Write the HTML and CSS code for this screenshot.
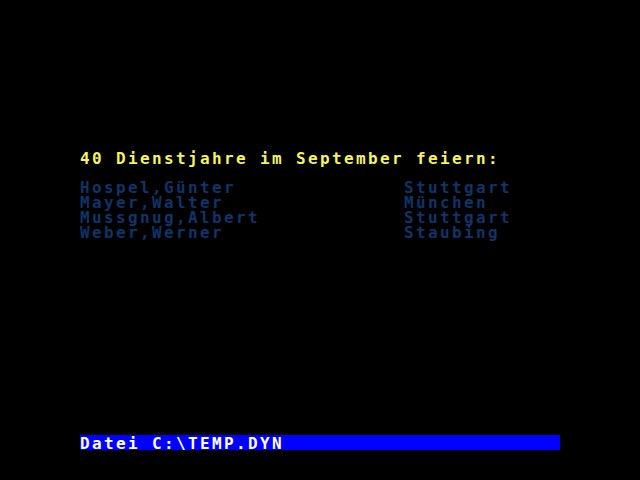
FILE: index.html
```html
<!DOCTYPE html>
<html>
<head>
<meta charset="utf-8">
<link rel="stylesheet" href="styles.css">
</head>
<body>
<div class="screen">
  <div class="heading">40 Dienstjahre im September feiern:</div>
  <div class="list">
    <div class="row"><span class="name">Hospel,Günter</span><span class="city">Stuttgart</span></div>
    <div class="row"><span class="name">Mayer,Walter</span><span class="city">München</span></div>
    <div class="row"><span class="name">Mussgnug,Albert</span><span class="city">Stuttgart</span></div>
    <div class="row"><span class="name">Weber,Werner</span><span class="city">Staubing</span></div>
  </div>
  <div class="status">Datei C:\TEMP.DYN</div>
</div>
</body>
</html>
```
FILE: styles.css
```css
html, body {
  margin: 0;
  padding: 0;
  background: #000;
}
.screen {
  width: 480px;
  height: 480px;
  margin-left: 80px;
  display: flex;
  flex-direction: column;
  font-family: "DejaVu Sans Mono", monospace;
  font-weight: bold;
  font-size: 16px;
  line-height: 15px;
  letter-spacing: 2.37px;
  white-space: pre;
}
.heading {
  margin-top: 151px;
  height: 15px;
  color: #f4f45c;
}
.list {
  margin-top: 14px;
  display: flex;
  flex-direction: column;
  color: #0e3468;
}
.row {
  display: flex;
  height: 15px;
}
.name {
  width: 324px;
}
.status {
  margin-top: auto;
  margin-bottom: 30px;
  height: 15px;
  padding-top: 1px;
  box-sizing: border-box;
  background: #0000ff;
  color: #fff;
}
```
